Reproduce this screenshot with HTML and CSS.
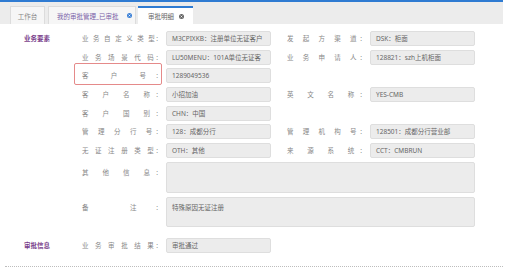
FILE: index.html
```html
<!DOCTYPE html>
<html lang="zh-CN">
<head>
    <meta charset="UTF-8">
    <title>审批明细</title>
    <link rel="stylesheet" href="styles.css">
</head>
<body>
    <div class="page">
        <div class="tabbar">
            <div class="tab tab-home">工作台</div>
            <div class="tab tab-link">
                <span>我的审批管理_已审批</span>
                <svg class="tab-icon" viewBox="0 0 10 10"><circle cx="5" cy="5" r="5"/><path d="M3.2 3.2l3.6 3.6M6.8 3.2l-3.6 3.6" stroke="#fff" stroke-width="1.5"/></svg>
            </div>
            <div class="tab tab-active">
                <span>审批明细</span>
                <svg class="tab-icon" viewBox="0 0 10 10"><circle cx="5" cy="5" r="5"/><path d="M3.2 3.2l3.6 3.6M6.8 3.2l-3.6 3.6" stroke="#fff" stroke-width="1.5"/></svg>
            </div>
        </div>

        <div class="form">
            <div class="section">业务要素</div>
            <div class="label">业 务 自 定 义 类 型:</div>
            <div class="field">M3CPIXKB：注册单位无证客户</div>
            <div class="label label-right">发 起 方 渠 道:</div>
            <div class="field">DSK：柜面</div>

            <div></div>
            <div class="label">业 务 场 景 代 码:</div>
            <div class="field">LU50MENU：101A单位无证客</div>
            <div class="label label-right">业 务 申 请 人:</div>
            <div class="field">128821：szh上机柜面</div>

            <div></div>
            <div class="label label-marked">客 户 号:</div>
            <div class="field">1289049536</div>
            <div></div>
            <div></div>

            <div></div>
            <div class="label">客 户 名 称:</div>
            <div class="field">小招加油</div>
            <div class="label label-right">英 文 名 称:</div>
            <div class="field">YES-CMB</div>

            <div></div>
            <div class="label">客 户 国 别:</div>
            <div class="field">CHN：中国</div>
            <div></div>
            <div></div>

            <div></div>
            <div class="label">管 理 分 行 号:</div>
            <div class="field">128：成都分行</div>
            <div class="label label-right">管 理 机 构 号:</div>
            <div class="field">128501：成都分行营业部</div>

            <div></div>
            <div class="label">无 证 注 册 类 型:</div>
            <div class="field">OTH：其他</div>
            <div class="label label-right">来 源 系 统:</div>
            <div class="field">CCT：CMBRUN</div>

            <div></div>
            <div class="label label-top">其 他 信 息:</div>
            <div class="field field-area field-other"></div>

            <div></div>
            <div class="label label-top">备 注:</div>
            <div class="field field-area field-remark">特殊原因无证注册</div>
        </div>

        <div class="form form-audit">
            <div class="section">审批信息</div>
            <div class="label">业 务 审 批 结 果:</div>
            <div class="field">审批通过</div>
        </div>

        <div class="divider"></div>
    </div>
</body>
</html>
```

FILE: styles.css
```css
body {
    margin: 0;
    padding: 0;
    background-color: #fff;
    font-family: "Noto Sans", "Noto Sans CJK SC", sans-serif;
    color: #666;
}
.page {
    width: 507px;
    height: 269px;
    overflow: hidden;
}
.tabbar {
    width: 503px;
    height: 24px;
    box-sizing: border-box;
    border-top: 2px solid #2f7bd2;
    background-color: #ececec;
    display: flex;
    align-items: flex-end;
    padding-left: 10px;
}
.tab {
    height: 18px;
    box-sizing: border-box;
    display: flex;
    align-items: center;
    font-size: 6.5px;
    border: 1px solid #dcdcdc;
    border-bottom: none;
    background-color: #f6f6f6;
}
.tab-home {
    width: 35px;
    justify-content: center;
    color: #888;
}
.tab-link {
    width: 88px;
    margin-left: 3px;
    padding: 0 3px 0 8px;
    justify-content: space-between;
    color: #7a5fa8;
}
.tab-link .tab-icon {
    fill: #3b80d6;
}
.tab-active {
    width: 55px;
    margin-left: 2px;
    padding: 0 9px 0 10px;
    justify-content: space-between;
    background-color: #fff;
    border: none;
    border-top: 2px solid #2f7bd2;
    color: #666;
}
.tab-active .tab-icon {
    fill: #666;
}
.tab-icon {
    width: 5px;
    height: 5px;
}

.form {
    display: grid;
    grid-template-columns: 50px 76px 105px 83px 105px;
    grid-template-rows: repeat(7, 15px) 31px 30px;
    column-gap: 8px;
    row-gap: 3.7px;
    padding: 7px 0 0 24px;
    font-size: 6.5px;
}
.form-audit {
    grid-template-rows: 15px;
    margin-top: 11px;
    padding-top: 0;
}
.section {
    color: #7b3f8c;
    font-weight: bold;
    line-height: 15px;
}
.label {
    line-height: 15px;
    color: #888;
    text-align: justify;
    text-align-last: justify;
    white-space: nowrap;
}
.label-right {
    padding-left: 8px;
}
.label-top {
    padding-top: 3px;
}
.label-marked {
    position: relative;
}
.label-marked::after {
    content: "";
    position: absolute;
    top: -5px;
    bottom: -2px;
    left: -8px;
    right: -4px;
    border: 1px solid #e58a8a;
    border-radius: 2px;
}
.field {
    box-sizing: border-box;
    height: 15px;
    line-height: 13px;
    padding: 0 5px;
    background-color: #ececec;
    border: 1px solid #dedede;
    border-radius: 2px;
    color: #666;
    white-space: nowrap;
    overflow: hidden;
}
.field-area {
    grid-column: 3 / 6;
    padding-top: 3px;
}
.field-other {
    height: 31px;
}
.field-remark {
    height: 30px;
}
.divider {
    margin: 13px 0 0 5px;
    width: 498px;
    border-top: 1px dotted #bdbdbd;
}
```
